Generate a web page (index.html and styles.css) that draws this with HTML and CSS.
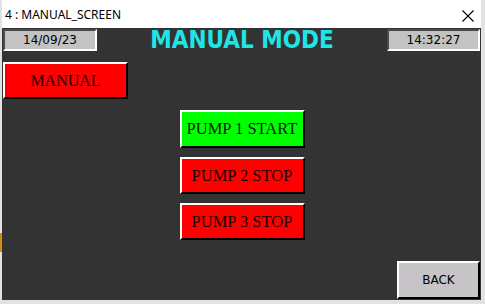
FILE: index.html
```html
<!DOCTYPE html>
<html>
<head>
<meta charset="utf-8">
<link rel="stylesheet" href="styles.css">
</head>
<body>
<div class="desk-mark"></div>
<div class="frame">
  <div class="titlebar">
    <span class="title">4 : MANUAL_SCREEN</span>
    <svg class="close" width="12" height="12" viewBox="0 0 12 12"><path d="M0.5 0.5 L11.5 11.5 M11.5 0.5 L0.5 11.5" stroke="#000" stroke-width="1.1" fill="none"/></svg>
  </div>
  <div class="screen">
    <div class="header">
      <div class="field date">14/09/23</div>
      <div class="heading">MANUAL MODE</div>
      <div class="field time">14:32:27</div>
    </div>
    <div class="btn red mode">MANUAL</div>
    <div class="pumps">
      <div class="btn green pump p1">PUMP 1 START</div>
      <div class="btn red pump">PUMP 2 STOP</div>
      <div class="btn red pump">PUMP 3 STOP</div>
    </div>
    <div class="back">BACK</div>
  </div>
</div>
</body>
</html>
```
FILE: styles.css
```css
html, body {
  margin: 0;
  padding: 0;
}
body {
  width: 485px;
  height: 304px;
  overflow: hidden;
  background: #e2e2e2;
  position: relative;
  font-family: "DejaVu Sans", "Liberation Sans", sans-serif;
}
.desk-mark {
  position: absolute;
  left: 0;
  top: 233px;
  width: 2px;
  height: 19px;
  background: #d88a10;
}
.frame {
  width: 479px;
  height: 300px;
  margin-left: 2px;
  display: flex;
  flex-direction: column;
}
.titlebar {
  height: 28px;
  background: #ffffff;
  display: flex;
  align-items: center;
  justify-content: space-between;
  padding: 0 7px 0 3px;
  box-sizing: border-box;
}
.title {
  font-family: "Noto Sans", "DejaVu Sans", sans-serif;
  font-size: 12px;
  color: #000;
  margin-top: 1px;
}
.close {
  display: block;
  margin-top: 3px;
}
.screen {
  flex: 1;
  background: #333333;
  display: flex;
  flex-direction: column;
  padding: 1px;
}
.header {
  display: flex;
  align-items: center;
  height: 22px;
}
.field {
  height: 22px;
  box-sizing: border-box;
  background: #c3c3c3;
  border: 2px solid;
  border-color: #4a4a4a #ffffff #ffffff #4a4a4a;
  display: flex;
  align-items: center;
  justify-content: center;
  font-family: "DejaVu Sans", sans-serif;
  font-size: 12px;
  color: #000;
}
.date { width: 94px; }
.time { width: 93px; }
.heading {
  flex: 1;
  text-align: center;
  font-family: "DejaVu Sans Condensed", "Liberation Sans", sans-serif;
  font-weight: bold;
  font-size: 24px;
  color: #1ee6e6;
  line-height: 22px;
}
.btn {
  box-sizing: border-box;
  width: 125px;
  height: 37px;
  border: 2px solid;
  border-color: #ffffff #000000 #000000 #ffffff;
  display: flex;
  align-items: center;
  justify-content: center;
  font-family: "Liberation Serif", serif;
  font-size: 16px;
}
.red {
  background: #ff0000;
  color: #1a0000;
}
.green {
  background: #00ff00;
  color: #001a00;
}
.mode {
  margin-top: 11px;
}
.pumps {
  align-self: center;
  display: flex;
  flex-direction: column;
  gap: 9px;
  margin-top: 11px;
  margin-left: 1px;
}
.pump {
  font-size: 16.5px;
}
.p1 { height: 38px; }
.back {
  margin-top: auto;
  align-self: flex-end;
  width: 83px;
  height: 38px;
  box-sizing: border-box;
  background: #c6c4c6;
  border: 2px solid;
  border-color: #ffffff #000000 #000000 #ffffff;
  display: flex;
  align-items: center;
  justify-content: center;
  font-family: "DejaVu Sans", sans-serif;
  font-size: 12px;
  color: #000;
}
```
